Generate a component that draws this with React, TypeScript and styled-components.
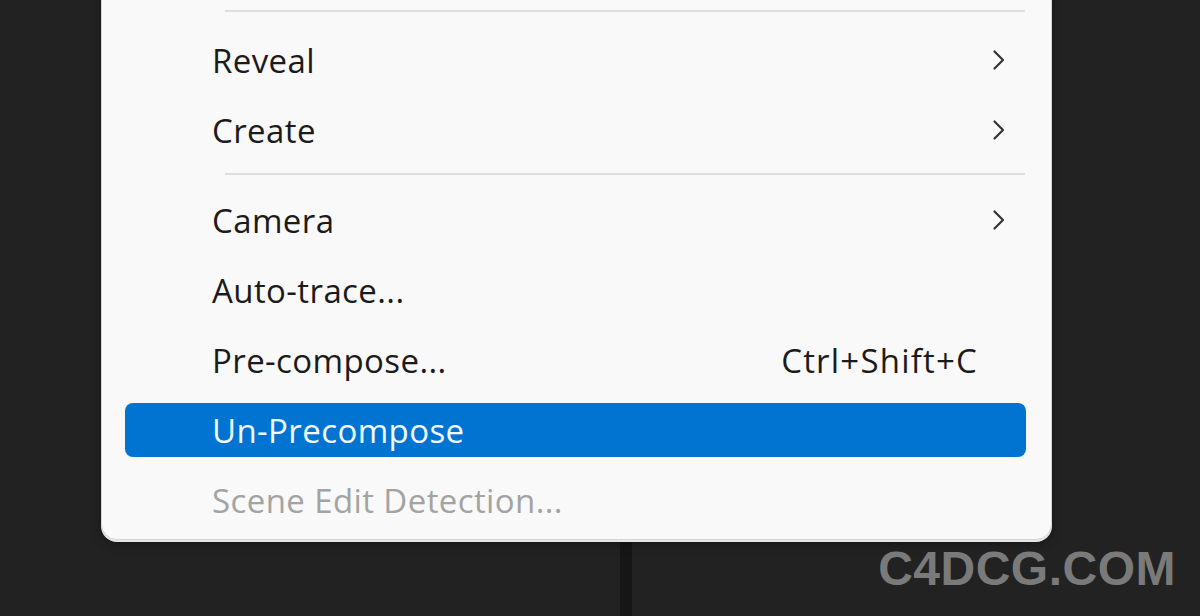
import React from "react";
import styled, { createGlobalStyle } from "styled-components";

const Global = createGlobalStyle`
  html, body { margin: 0; padding: 0; }
  body {
    background: #202020;
    font-family: "Open Sans", "Noto Sans", sans-serif;
    overflow: hidden;
  }
`;

const Stage = styled.div`
  position: relative;
  width: 1200px;
  height: 616px;
  overflow: hidden;
  display: flex;
  background: #212121;
`;

const Panel = styled.div<{ $w?: number }>`
  flex: ${(p) => (p.$w ? `0 0 ${p.$w}px` : "1 1 auto")};
  background: #222222;
`;

const Divider = styled.div`
  flex: 0 0 12px;
  background: #161616;
`;

const Menu = styled.div`
  position: absolute;
  left: 101px;
  top: -10px;
  width: 951px;
  box-sizing: border-box;
  padding: 11px 0 4px;
  background: #f9f9f9;
  border: 1px solid #d6d6d6;
  border-radius: 0 0 16px 16px;
  box-shadow: 0 2px 0 #e6e6e6, 0 4px 10px rgba(0, 0, 0, 0.35);
  display: flex;
  flex-direction: column;
`;

const Separator = styled.div<{ $after: number }>`
  height: 2px;
  margin: 8px 26px ${(p) => p.$after}px 123px;
  background: #dedede;
`;

const Row = styled.div<{ $active?: boolean; $disabled?: boolean }>`
  height: 54px;
  margin: 8px 25px 8px 23px;
  padding: 0 20px 0 87px;
  border-radius: 8px;
  display: flex;
  align-items: center;
  font-size: 33px;
  letter-spacing: 0.4px;
  background: ${(p) => (p.$active ? "#0174d1" : "transparent")};
  color: ${(p) => (p.$active ? "#f2f9ff" : p.$disabled ? "#a3a3a3" : "#1b1b1b")};
`;

const Label = styled.span`
  flex: 1 1 auto;
  line-height: 1;
  padding-top: 1px;
`;

const Shortcut = styled.span`
  margin-right: 28px;
  line-height: 1;
  padding-top: 1px;
  letter-spacing: 1.2px;
`;

const Chevron = styled.svg`
  width: 14px;
  height: 22px;
`;

const Watermark = styled.div`
  position: absolute;
  right: 24px;
  top: 541px;
  font-family: "Liberation Sans", Arial, sans-serif;
  font-weight: 700;
  font-size: 48px;
  letter-spacing: 0.5px;
  color: #7a7a7a;
`;

const Arrow = () => (
  <Chevron viewBox="0 0 14 22">
    <path d="M2.5 2.5 L11 11 L2.5 19.5" fill="none" stroke="#333" strokeWidth="2.2" strokeLinecap="round" strokeLinejoin="round" />
  </Chevron>
);

export default function App() {
  return (
    <>
      <Global />
      <Stage>
        <Panel $w={620} />
        <Divider />
        <Panel />
        <Menu>
          <Separator $after={13} />
          <Row>
            <Label>Reveal</Label>
            <Arrow />
          </Row>
          <Row>
            <Label>Create</Label>
            <Arrow />
          </Row>
          <Separator $after={10} />
          <Row>
            <Label>Camera</Label>
            <Arrow />
          </Row>
          <Row>
            <Label>Auto-trace...</Label>
          </Row>
          <Row>
            <Label>Pre-compose...</Label>
            <Shortcut>Ctrl+Shift+C</Shortcut>
          </Row>
          <Row $active>
            <Label>Un-Precompose</Label>
          </Row>
          <Row $disabled>
            <Label>Scene Edit Detection...</Label>
          </Row>
        </Menu>
        <Watermark>C4DCG.COM</Watermark>
      </Stage>
    </>
  );
}
